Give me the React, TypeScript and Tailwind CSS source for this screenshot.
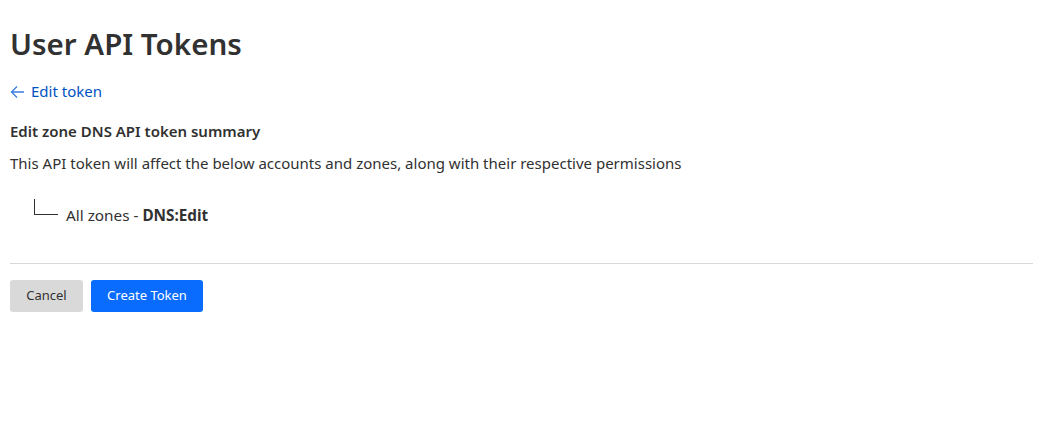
const font = { fontFamily: '"Noto Sans", "Open Sans", sans-serif' };

export default function App() {
  return (
    <div className="bg-white min-h-screen pl-[10px] pr-[21px] pt-[24px] text-[#313131]" style={font}>
      <h1 className="text-[29.5px] leading-[40px] font-semibold">User API Tokens</h1>

      <a href="#" className="mt-[16px] flex items-center gap-[6px] text-[15px] leading-[22px] text-[#0051c3]">
        <svg width="15" height="14" viewBox="0 0 15 14" fill="none" stroke="#3b7ee0" strokeWidth="1.3" className="mt-[2px]">
          <path d="M14 7H1.5M7 1.5L1.5 7L7 12.5" />
        </svg>
        Edit token
      </a>

      <h2 className="mt-[19px] text-[15px] leading-[20px] font-semibold">Edit zone DNS API token summary</h2>
      <p className="mt-[11px] text-[15px] leading-[22px]">
        This API token will affect the below accounts and zones, along with their respective permissions
      </p>

      {/* permission tree */}
      <div className="mt-[25px] ml-[24px] flex items-end gap-[8px]">
        <div className="w-[24px] h-[16px] border-l border-b border-[#313131] mb-[11px]" />
        <span className="text-[15.3px] leading-[22px]">
          All zones - <b className="font-bold">DNS:Edit</b>
        </span>
      </div>

      <hr className="mt-[37px] border-0 border-t border-[#d9d9d9]" />

      <div className="mt-[16px] flex gap-[8px]">
        <button className="h-[32px] w-[73px] rounded-[3px] bg-[#d9d9d9] text-[13px] text-[#313131]">Cancel</button>
        <button className="h-[32px] w-[112px] rounded-[3px] bg-[#0a6cff] text-[13px] text-white">Create Token</button>
      </div>
    </div>
  );
}
